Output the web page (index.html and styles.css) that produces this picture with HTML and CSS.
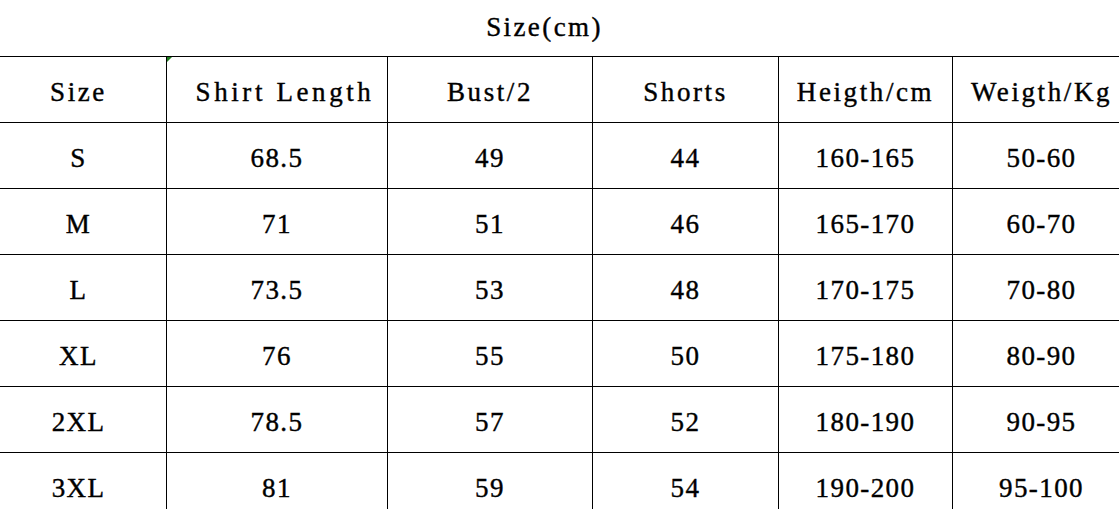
FILE: index.html
```html
<!DOCTYPE html>
<html>
<head>
<meta charset="utf-8">
<link rel="stylesheet" href="styles.css">
</head>
<body>
<div class="title">Size(cm)</div>
<table class="chart">
  <colgroup>
    <col class="c1"><col class="c2"><col class="c3"><col class="c4"><col class="c5"><col class="c6">
  </colgroup>
  <thead>
    <tr>
      <th>Size</th>
      <th class="shirt"><span class="flag"></span>Shirt Length</th>
      <th>Bust/2</th>
      <th>Shorts</th>
      <th>Heigth/cm</th>
      <th>Weigth/Kg</th>
    </tr>
  </thead>
  <tbody>
    <tr><td>S</td><td>68.5</td><td>49</td><td>44</td><td>160-165</td><td>50-60</td></tr>
    <tr><td>M</td><td>71</td><td>51</td><td>46</td><td>165-170</td><td>60-70</td></tr>
    <tr><td>L</td><td>73.5</td><td>53</td><td>48</td><td>170-175</td><td>70-80</td></tr>
    <tr><td>XL</td><td>76</td><td>55</td><td>50</td><td>175-180</td><td>80-90</td></tr>
    <tr><td>2XL</td><td>78.5</td><td>57</td><td>52</td><td>180-190</td><td>90-95</td></tr>
    <tr><td>3XL</td><td>81</td><td>59</td><td>54</td><td>190-200</td><td>95-100</td></tr>
  </tbody>
</table>
</body>
</html>
```

FILE: styles.css
```css
html, body {
  margin: 0;
  padding: 0;
  background: #fff;
  overflow: hidden;
}
body {
  font-family: "Liberation Serif", "Times New Roman", serif;
  font-size: 27px;
  color: #000;
  -webkit-text-stroke: 0.4px #000;
}
.title {
  height: 56px;
  line-height: 54px;
  text-align: center;
  padding-right: 30px;
  letter-spacing: 2.4px;
  box-sizing: border-box;
}
.chart {
  border-collapse: collapse;
  table-layout: fixed;
  width: 1140px;
  margin-left: -10px;
}
.c1 { width: 176px; }
.c2 { width: 221px; }
.c3 { width: 205px; }
.c4 { width: 186px; }
.c5 { width: 174px; }
.c6 { width: 178px; }
.chart th, .chart td {
  border: 1px solid #000;
  height: 66px;
  padding: 6px 0 0 0;
  text-align: center;
  vertical-align: middle;
  font-weight: normal;
  white-space: nowrap;
  box-sizing: border-box;
  letter-spacing: 1.4px;
}
.chart th {
  padding-top: 6px;
  letter-spacing: 2.6px;
}
.chart th.shirt {
  position: relative;
  padding-left: 16px;
  letter-spacing: 3.6px;
}
.flag {
  position: absolute;
  left: 0;
  top: 0;
  width: 0;
  height: 0;
  border-top: 5px solid #1e7b1e;
  border-right: 5px solid transparent;
}
```
